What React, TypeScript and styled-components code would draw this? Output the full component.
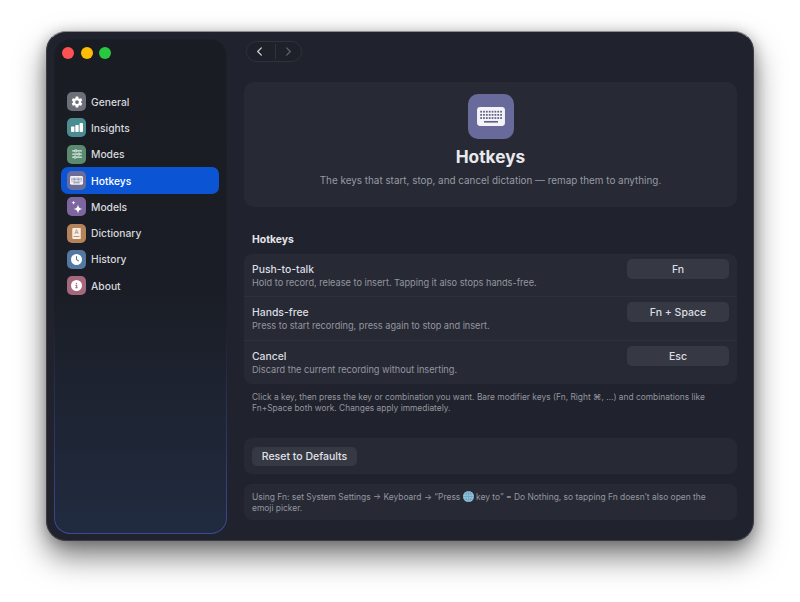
import React from "react";
import styled, { createGlobalStyle } from "styled-components";
import { FaCircleInfo, FaClock, FaSliders } from "react-icons/fa6";
import { IoSettingsSharp, IoChevronBack, IoChevronForward } from "react-icons/io5";

const KeyboardGlyph = ({ size }: { size: number }) => (
  <svg width={size} height={size * 0.68} viewBox="0 0 44 30">
    <rect x="0" y="0" width="44" height="30" rx="5" fill="#f4f4f8" />
    {[6, 11, 16].map((y) =>
      [5, 9.5, 14, 18.5, 23, 27.5, 32, 36.5].map((x) => (
        <rect key={`${x}-${y}`} x={x} y={y} width="2.8" height="2.8" fill="#5f6288" />
      ))
    )}
    <rect x="11" y="22" width="22" height="2.6" fill="#5f6288" />
  </svg>
);

const BarsGlyph = () => (
  <svg width="12" height="9" viewBox="0 0 12 9">
    <rect x="0" y="3.5" width="3.4" height="5.5" rx="0.7" fill="#fff" />
    <rect x="4.3" y="2" width="3.4" height="7" rx="0.7" fill="#fff" />
    <rect x="8.6" y="0" width="3.4" height="9" rx="0.7" fill="#fff" />
  </svg>
);

const BookGlyph = () => (
  <svg width="9" height="11" viewBox="0 0 10 13">
    <path d="M1.5 0H10V13H1.5A1.5 1.5 0 0 1 0 11.5V1.5A1.5 1.5 0 0 1 1.5 0Z" fill="#f6eee6" />
    <path d="M3 7L5 2L7 7M3.8 5.4H6.2" stroke="#b5835a" strokeWidth="0.9" fill="none" />
    <rect x="1.4" y="9.6" width="7" height="1" fill="#b5835a" />
  </svg>
);

const SparkleGlyph = () => (
  <svg width="12" height="14" viewBox="0 0 12 14">
    <path d="M7 4.5C7.4 7.4 8.6 8.6 11.5 9C8.6 9.4 7.4 10.6 7 13.5C6.6 10.6 5.4 9.4 2.5 9C5.4 8.6 6.6 7.4 7 4.5Z" fill="#fff" />
    <path d="M2.5 0.5C2.7 2 3.2 2.5 4.7 2.7C3.2 2.9 2.7 3.4 2.5 4.9C2.3 3.4 1.8 2.9 0.3 2.7C1.8 2.5 2.3 2 2.5 0.5Z" fill="#fff" />
  </svg>
);

const GlobeGlyph = () => (
  <svg width="11" height="11" viewBox="0 0 12 12">
    <circle cx="6" cy="6" r="6" fill="#8fc6de" />
    <path d="M0 6H12M6 0V12M1.2 3H10.8M1.2 9H10.8" stroke="#6d8fb0" strokeWidth="0.6" />
    <ellipse cx="6" cy="6" rx="2.8" ry="6" fill="none" stroke="#6d8fb0" strokeWidth="0.6" />
  </svg>
);

const navItems = [
  { label: "General", color: "#6c6e78", icon: <IoSettingsSharp size={12} color="#fff" /> },
  { label: "Insights", color: "#4a8c90", icon: <BarsGlyph /> },
  { label: "Modes", color: "#5a8a70", icon: <FaSliders size={10} color="#dfe9e3" /> },
  { label: "Hotkeys", color: "#6a6d9a", icon: <KeyboardGlyph size={13} />, active: true },
  { label: "Models", color: "#7d659f", icon: <SparkleGlyph /> },
  { label: "Dictionary", color: "#b5835a", icon: <BookGlyph /> },
  { label: "History", color: "#54789f", icon: <FaClock size={11} color="#fff" /> },
  { label: "About", color: "#a4677c", icon: <FaCircleInfo size={11} color="#fff" /> },
];

const hotkeys = [
  {
    title: "Push-to-talk",
    desc: "Hold to record, release to insert. Tapping it also stops hands-free.",
    keys: "Fn",
  },
  {
    title: "Hands-free",
    desc: "Press to start recording, press again to stop and insert.",
    keys: "Fn + Space",
  },
  {
    title: "Cancel",
    desc: "Discard the current recording without inserting.",
    keys: "Esc",
  },
];

export default function App() {
  return (
    <>
      <GlobalStyle />
      <Page>
        <Window>
          <Sidebar>
            <Lights>
              <Light $color="#fe5154" />
              <Light $color="#febc06" />
              <Light $color="#28c840" />
            </Lights>
            <NavList>
              {navItems.map((item) => (
                <NavRow key={item.label} $active={item.active}>
                  <NavIcon $color={item.color}>{item.icon}</NavIcon>
                  {item.label}
                </NavRow>
              ))}
            </NavList>
          </Sidebar>
          <Main>
            <NavPill>
              <NavButton $dim={false}>
                <IoChevronBack size={13} />
              </NavButton>
              <NavDivider />
              <NavButton $dim>
                <IoChevronForward size={13} />
              </NavButton>
            </NavPill>

            <Hero>
              <HeroIcon>
                <KeyboardGlyph size={28} />
              </HeroIcon>
              <HeroTitle>Hotkeys</HeroTitle>
              <HeroSub>The keys that start, stop, and cancel dictation — remap them to anything.</HeroSub>
            </Hero>

            <SectionTitle>Hotkeys</SectionTitle>
            <KeyCard>
              {hotkeys.map((row) => (
                <KeyRow key={row.title}>
                  <RowText>
                    <RowTitle>{row.title}</RowTitle>
                    <RowDesc>{row.desc}</RowDesc>
                  </RowText>
                  <KeyButton>{row.keys}</KeyButton>
                </KeyRow>
              ))}
            </KeyCard>
            <Footnote>
              Click a key, then press the key or combination you want. Bare modifier keys (Fn, Right ⌘, …) and
              combinations like Fn+Space both work. Changes apply immediately.
            </Footnote>

            <ResetCard>
              <ResetButton>Reset to Defaults</ResetButton>
            </ResetCard>
            <NoteCard>
              Using Fn: set System Settings → Keyboard → “Press <GlobeGlyph /> key to” = Do Nothing, so tapping Fn
              doesn’t also open the
              <br />
              emoji picker.
            </NoteCard>
          </Main>
        </Window>
      </Page>
    </>
  );
}

const GlobalStyle = createGlobalStyle`
  html, body {
    margin: 0;
    padding: 0;
    background: #ffffff;
  }
  body {
    font-family: Inter, "Liberation Sans", sans-serif;
    -webkit-font-smoothing: antialiased;
  }
`;

const Page = styled.div`
  width: 800px;
  height: 602px;
  box-sizing: border-box;
  padding: 31px 46px 61px;
  overflow: hidden;
`;

const Window = styled.div`
  width: 708px;
  height: 510px;
  display: flex;
  box-sizing: border-box;
  background: #20232d;
  border-radius: 20px;
  border: 1px solid #3a3c44;
  border-top-color: #8c8d92;
  box-shadow: 0 16px 30px rgba(0, 0, 0, 0.5), 0 2px 14px rgba(0, 0, 0, 0.25);
  overflow: hidden;
`;

const Sidebar = styled.aside`
  width: 173px;
  margin: 7px 0 6px 7px;
  box-sizing: border-box;
  padding: 7px 7px 0 6px;
  border-radius: 16px;
  border: 1px solid transparent;
  background:
    linear-gradient(to bottom, #1a1c23 0%, #1a1d25 50%, #212b40 100%) padding-box,
    linear-gradient(to bottom, #1d1f27 0%, #1d1f27 55%, #3b4a92 100%) border-box;
`;

const Lights = styled.div`
  display: flex;
  gap: 6.5px;
  padding-left: 1px;
`;

const Light = styled.span<{ $color: string }>`
  width: 12px;
  height: 12px;
  border-radius: 50%;
  background: ${(p) => p.$color};
`;

const NavList = styled.nav`
  margin-top: 29.5px;
  display: flex;
  flex-direction: column;
`;

const NavRow = styled.div<{ $active?: boolean }>`
  height: 26.3px;
  display: flex;
  align-items: center;
  gap: 5px;
  padding-left: 6px;
  border-radius: 7px;
  font-size: 10.3px;
  font-weight: 500;
  color: ${(p) => (p.$active ? "#ffffff" : "#d6d7db")};
  background: ${(p) => (p.$active ? "#0b55d5" : "transparent")};
`;

const NavIcon = styled.span<{ $color: string }>`
  width: 19px;
  height: 19px;
  border-radius: 5px;
  background: ${(p) => p.$color};
  display: flex;
  align-items: center;
  justify-content: center;
  flex-shrink: 0;
`;

const Main = styled.main`
  flex: 1;
  min-width: 0;
  box-sizing: border-box;
  padding: 9px 16px 0 17px;
  display: flex;
  flex-direction: column;
`;

const NavPill = styled.div`
  align-self: flex-start;
  margin-left: 2px;
  height: 21px;
  width: 56px;
  display: flex;
  align-items: center;
  box-sizing: border-box;
  border: 1px solid #2f323d;
  border-radius: 11px;
  background: #1e212a;
`;

const NavButton = styled.span<{ $dim: boolean }>`
  flex: 1;
  display: flex;
  align-items: center;
  justify-content: center;
  padding-right: ${(p) => (p.$dim ? "0" : "3px")};
  color: ${(p) => (p.$dim ? "#62656f" : "#d4d5d9")};
`;

const NavDivider = styled.span`
  width: 1px;
  height: 15px;
  background: #30333e;
`;

const Hero = styled.section`
  margin-top: 20px;
  height: 125px;
  box-sizing: border-box;
  padding-top: 12px;
  background: #272a35;
  border-radius: 10px;
  display: flex;
  flex-direction: column;
  align-items: center;
`;

const HeroIcon = styled.div`
  width: 46px;
  height: 45px;
  border-radius: 10px;
  background: #676a9a;
  display: flex;
  align-items: center;
  justify-content: center;
`;

const HeroTitle = styled.h1`
  margin: 6px 0 0;
  font-size: 17.3px;
  line-height: 24px;
  font-weight: 700;
  color: #e9e9ec;
`;

const HeroSub = styled.p`
  margin: 4px 0 0;
  font-size: 9.9px;
  line-height: 14px;
  color: #989aa3;
`;

const SectionTitle = styled.h2`
  margin: 26px 0 0 8px;
  font-size: 10.4px;
  line-height: 14px;
  font-weight: 700;
  color: #e4e4e8;
`;

const KeyCard = styled.section`
  margin-top: 7px;
  background: #272a35;
  border-radius: 8px;
  display: flex;
  flex-direction: column;
`;

const KeyRow = styled.div`
  height: 43.4px;
  box-sizing: border-box;
  padding: 5px 8px 0;
  display: flex;
  justify-content: space-between;
  align-items: flex-start;
  border-bottom: 1px solid #2e313c;

  &:last-child {
    border-bottom: none;
  }
`;

const RowText = styled.div`
  display: flex;
  flex-direction: column;
  padding-top: 4px;
`;

const RowTitle = styled.span`
  font-size: 10.4px;
  line-height: 14px;
  font-weight: 500;
  color: #dcdde1;
`;

const RowDesc = styled.span`
  font-size: 9.18px;
  line-height: 12px;
  color: #94969f;
`;

const KeyButton = styled.span`
  width: 102px;
  height: 20px;
  border-radius: 5px;
  background: #363944;
  display: flex;
  align-items: center;
  justify-content: center;
  padding-top: 1px;
  box-sizing: border-box;
  font-size: 10.5px;
  font-weight: 500;
  color: #dcdde1;
`;

const Footnote = styled.p`
  margin: 8px 8px 0;
  font-size: 8.4px;
  line-height: 11px;
  color: #94969f;
`;

const ResetCard = styled.section`
  margin-top: 24px;
  height: 36px;
  box-sizing: border-box;
  padding: 9px 8px 0;
  background: #272a35;
  border-radius: 8px;
`;

const ResetButton = styled.button`
  display: block;
  width: 105px;
  height: 19px;
  padding: 0;
  border: none;
  border-radius: 5px;
  background: #363944;
  font-family: inherit;
  font-size: 10.5px;
  font-weight: 500;
  color: #e0e1e5;
`;

const NoteCard = styled.section`
  margin-top: 10px;
  height: 36px;
  box-sizing: border-box;
  padding: 7px 8px 0;
  background: #272a35;
  border-radius: 8px;
  font-size: 8.45px;
  line-height: 11px;
  color: #94969f;

  svg {
    vertical-align: -2px;
  }
`;
